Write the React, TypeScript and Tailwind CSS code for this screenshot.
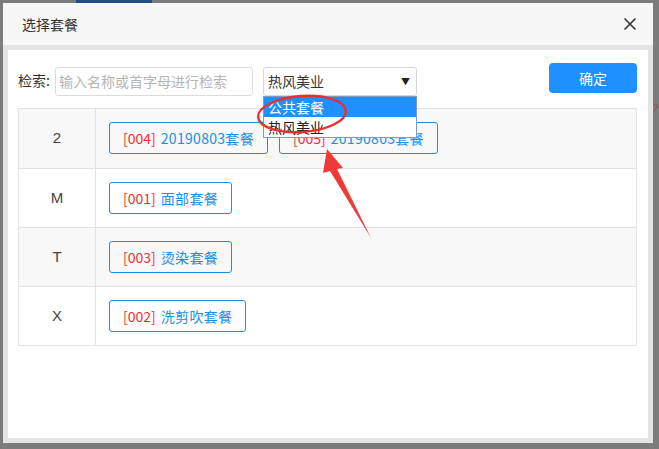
import React from "react";

const font = { fontFamily: '"Noto Sans CJK SC", "Noto Sans", sans-serif' };

const rows: { key: string; items: { code: string; name: string }[]; shade: boolean }[] = [
  {
    key: "2",
    shade: true,
    items: [
      { code: "[004]", name: "20190803套餐" },
      { code: "[005]", name: "20190803套餐" },
    ],
  },
  { key: "M", shade: false, items: [{ code: "[001]", name: "面部套餐" }] },
  { key: "T", shade: true, items: [{ code: "[003]", name: "烫染套餐" }] },
  { key: "X", shade: false, items: [{ code: "[002]", name: "洗剪吹套餐" }] },
];

export default function App() {
  return (
    <div className="relative w-[659px] h-[449px] overflow-hidden bg-[#7c7c7c]" style={font}>
      {/* page behind the overlay */}
      <div className="absolute left-[76px] top-0 w-[76px] h-[3px] bg-[#1f4f86]" />
      <svg className="absolute left-[653px] top-[100px]" width="6" height="20" viewBox="0 0 6 20">
        <path d="M1 4 L5 8 M5 4 L1 12" stroke="#a04848" strokeWidth="1" fill="none" />
      </svg>

      <div className="pl-[3px] pt-[3px]">
        <div className="w-[650px] h-[440px] bg-[#e4e4e4] flex flex-col">
          {/* header */}
          <div className="h-[42px] bg-[#f7f7f7] flex items-center justify-between pl-[19px] pr-[16px] shrink-0">
            <span className="text-[14px] text-[#333] leading-none">选择套餐</span>
            <svg width="14" height="14" viewBox="0 0 14 14">
              <path d="M1.5 1.5 L12.5 12.5 M12.5 1.5 L1.5 12.5" stroke="#333" strokeWidth="1.6" />
            </svg>
          </div>
          {/* panel */}
          <div className="mx-[5px] mt-[5px] h-[388px] bg-white pl-[10px] pr-[11px] pt-[13px] relative">
            <div className="flex items-start h-[45px]">
              <span className="w-[37px] shrink-0 text-[14px] text-[#333] mt-[7px] leading-[20px]">检索:</span>
              <div className="w-[198px] h-[29px] mt-[4px] border border-[#dcdcdc] rounded-[3px] flex items-center px-[3px] text-[14px] text-[#b5b5b5] whitespace-nowrap overflow-hidden">
                输入名称或首字母进行检索
              </div>
              <div className="relative ml-[10px] mt-[4px] w-[154px] h-[29px] border border-[#d6d6d6] rounded-[3px] flex items-center justify-between pl-[4px] pr-[6px] text-[14px] text-[#333]">
                <span>热风美业</span>
                <span className="text-[9px] text-[#222]">▼</span>
                <div className="absolute left-[-1px] top-[28px] w-[154px] border border-[#7f9ac9] bg-white z-20 text-[14px] leading-[20px]">
                  <div className="bg-[#1e90ff] text-white px-[4px]">公共套餐</div>
                  <div className="text-[#222] px-[4px]">热风美业</div>
                </div>
              </div>
              <button className="ml-auto w-[88px] h-[30px] rounded-[4px] bg-[#1e90ff] text-white text-[14px] flex items-center justify-center">
                确定
              </button>
            </div>
            {/* table */}
            <div className="border border-[#e3e3e3]">
              {rows.map((r, i) => (
                <div
                  key={r.key}
                  className={`flex h-[59px] ${i > 0 ? "border-t border-[#e3e3e3]" : ""} ${r.shade ? "bg-[#f8f8f8]" : "bg-white"}`}
                >
                  <div className="w-[77px] shrink-0 border-r border-[#e3e3e3] flex items-center justify-center text-[15px] text-[#444]" style={{ fontFamily: '"Liberation Sans", "Noto Sans CJK SC", sans-serif' }}>
                    {r.key}
                  </div>
                  <div className="flex items-start pt-[13px] pl-[13px] gap-[11px]">
                    {r.items.map((it) => (
                      <div
                        key={it.code}
                        className="h-[32px] px-[13px] border border-[#1a8fe3] rounded-[3px] flex items-center text-[14px] whitespace-nowrap"
                      >
                        <span className="text-[#f03030]">{it.code}</span>
                        <span className="text-[#1a8fe3] ml-[5px] tracking-[0.3px]">{it.name}</span>
                      </div>
                    ))}
                  </div>
                </div>
              ))}
            </div>
          </div>
        </div>
      </div>

      {/* annotation */}
      <svg className="absolute left-0 top-0 pointer-events-none z-30" width="659" height="449" viewBox="0 0 659 449">
        <ellipse cx="302" cy="114" rx="44" ry="18" fill="none" stroke="#ee2e2e" strokeWidth="2.4" transform="rotate(-4 302 114)" />
        <path d="M327 149 L343 168 L337 169 L371 238 L330 171 L323 173 Z" fill="#f03a3a" />
      </svg>
    </div>
  );
}
